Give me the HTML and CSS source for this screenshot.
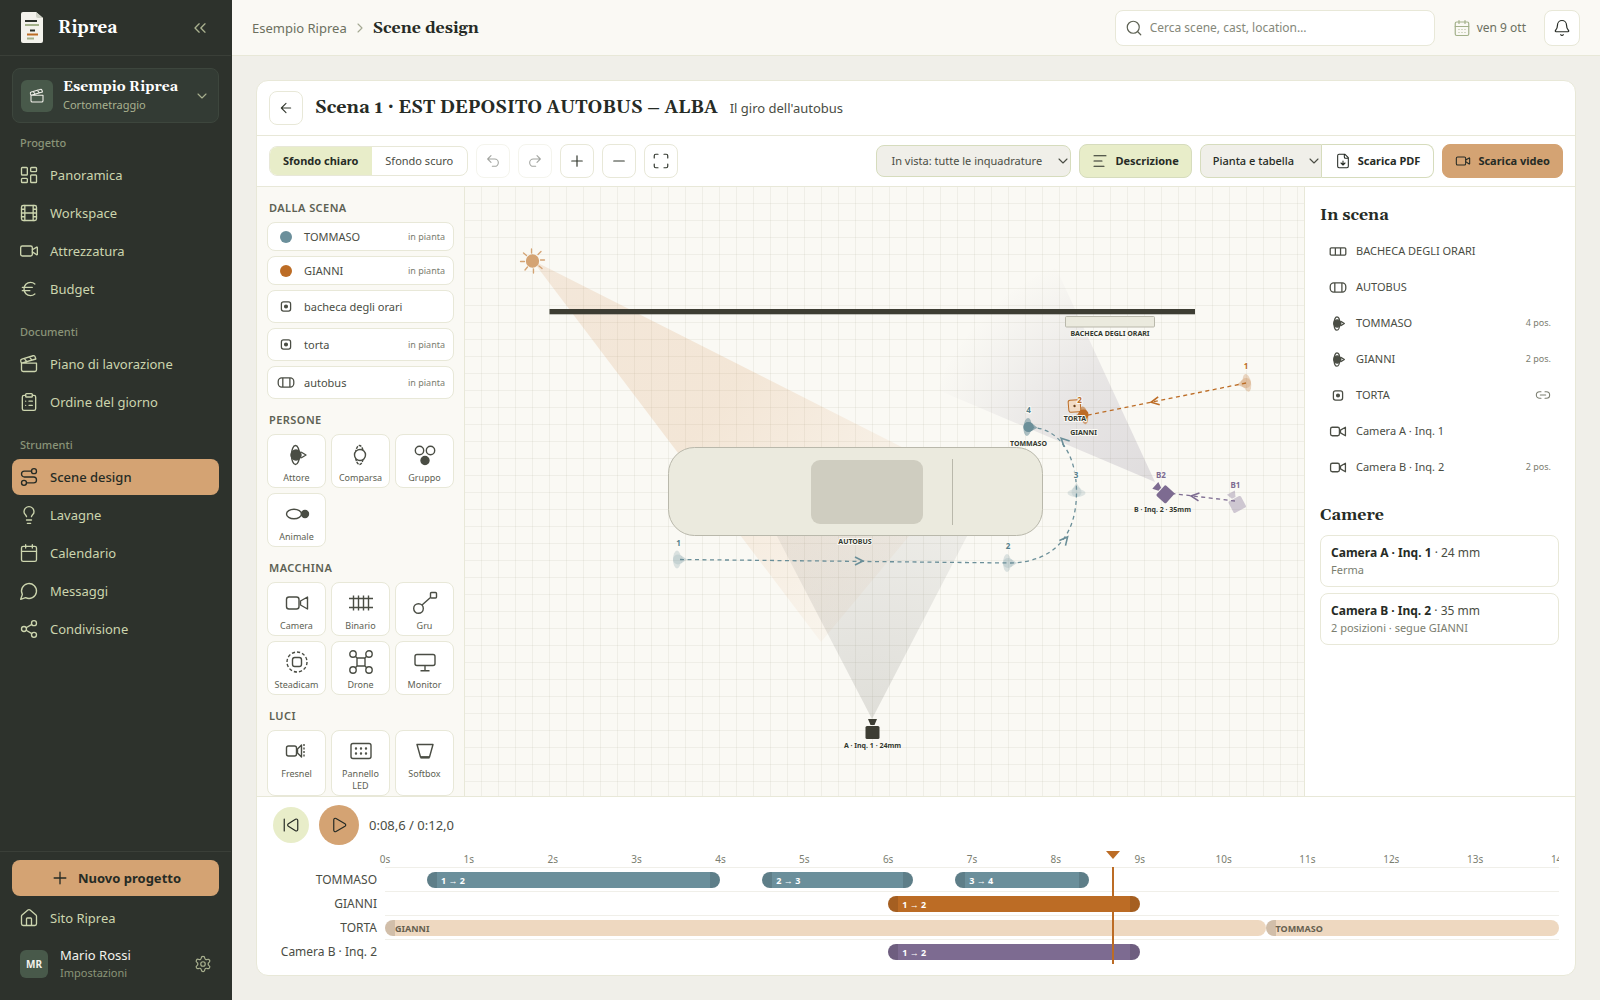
FILE: index.html
```html
<!DOCTYPE html>
<html lang="it">
<head>
<meta charset="utf-8">
<meta name="viewport" content="width=device-width, initial-scale=1">
<title>Scene design · Riprea</title>
<link rel="stylesheet" href="styles.css">
</head>
<body>
<svg class="sprite" aria-hidden="true">
  <symbol id="i-dashboard" viewBox="0 0 24 24"><rect x="3" y="3" width="7" height="9" rx="1"/><rect x="14" y="3" width="7" height="5" rx="1"/><rect x="14" y="12" width="7" height="9" rx="1"/><rect x="3" y="16" width="7" height="5" rx="1"/></symbol>
  <symbol id="i-film" viewBox="0 0 24 24"><rect x="3" y="3" width="18" height="18" rx="2"/><path d="M7 3v18M17 3v18M3 7.500h4M3 12h18M3 16.500h4M17 7.500h4M17 16.500h4"/></symbol>
  <symbol id="i-video" viewBox="0 0 24 24"><rect x="2" y="6" width="14" height="12" rx="2"/><path d="m16 13 5.223 3.482a.5.5 0 0 0 .777-.416V7.870a.5.5 0 0 0-.752-.432L16 10.500"/></symbol>
  <symbol id="i-euro" viewBox="0 0 24 24"><path d="M4 10h12M4 14h9M19 6a7.700 7.700 0 0 0-5.200-2A7.900 7.900 0 0 0 6 12c0 4.400 3.500 8 7.800 8 2 0 3.800-.8 5.200-2"/></symbol>
  <symbol id="i-clapper" viewBox="0 0 24 24"><path d="M20.200 6 3 11l-.9-2.400c-.3-1.100.3-2.200 1.300-2.500l13.500-4c1.100-.3 2.200.3 2.500 1.300ZM6.200 5.300l3.100 3.900M12.400 3.400l3.100 4M3 11h18v8a2 2 0 0 1-2 2H5a2 2 0 0 1-2-2Z"/></symbol>
  <symbol id="i-clipboard" viewBox="0 0 24 24"><rect x="8" y="2" width="8" height="4" rx="1"/><path d="M16 4h2a2 2 0 0 1 2 2v14a2 2 0 0 1-2 2H6a2 2 0 0 1-2-2V6a2 2 0 0 1 2-2h2M12 11h4M12 16h4M8 11h.01M8 16h.01"/></symbol>
  <symbol id="i-route" viewBox="0 0 24 24"><circle cx="6" cy="19" r="3"/><path d="M9 19h8.500a3.500 3.500 0 0 0 0-7h-11a3.500 3.500 0 0 1 0-7H15"/><circle cx="18" cy="5" r="3"/></symbol>
  <symbol id="i-bulb" viewBox="0 0 24 24"><path d="M15 14c.2-1 .7-1.700 1.500-2.500 1-.9 1.500-2.200 1.500-3.500A6 6 0 0 0 6 8c0 1 .2 2.200 1.500 3.500.7.7 1.300 1.500 1.500 2.500M9 18h6M10 22h4"/></symbol>
  <symbol id="i-calendar" viewBox="0 0 24 24"><rect x="3" y="4" width="18" height="18" rx="2"/><path d="M8 2v4M16 2v4M3 10h18"/></symbol>
  <symbol id="i-caldays" viewBox="0 0 24 24"><rect x="3" y="4" width="18" height="18" rx="2"/><path d="M8 2v4M16 2v4M3 10h18M8 14h.01M12 14h.01M16 14h.01M8 18h.01M12 18h.01M16 18h.01"/></symbol>
  <symbol id="i-message" viewBox="0 0 24 24"><path d="M7.900 20A9 9 0 1 0 4 16.100L2 22Z"/></symbol>
  <symbol id="i-share" viewBox="0 0 24 24"><circle cx="18" cy="5" r="3"/><circle cx="6" cy="12" r="3"/><circle cx="18" cy="19" r="3"/><path d="m8.600 13.500 6.800 4M15.400 6.500l-6.800 4"/></symbol>
  <symbol id="i-home" viewBox="0 0 24 24"><path d="M15 21v-8a1 1 0 0 0-1-1h-4a1 1 0 0 0-1 1v8M3 10a2 2 0 0 1 .7-1.500l7-6a2 2 0 0 1 2.600 0l7 6A2 2 0 0 1 21 10v9a2 2 0 0 1-2 2H5a2 2 0 0 1-2-2z"/></symbol>
  <symbol id="i-gear" viewBox="0 0 24 24"><path d="M9.700 4.100a2.300 2.300 0 0 1 4.600 0 2.300 2.300 0 0 0 3.300 1.900 2.300 2.300 0 0 1 2.300 4 2.300 2.300 0 0 0 0 3.900 2.300 2.300 0 0 1-2.300 4 2.300 2.300 0 0 0-3.300 1.900 2.300 2.300 0 0 1-4.600 0 2.300 2.300 0 0 0-3.300-1.900 2.300 2.300 0 0 1-2.300-4 2.300 2.300 0 0 0 0-3.900 2.300 2.300 0 0 1 2.300-4 2.300 2.300 0 0 0 3.300-1.900"/><circle cx="12" cy="12" r="3"/></symbol>
  <symbol id="i-chevs" viewBox="0 0 24 24"><path d="m11 17-5-5 5-5M18 17l-5-5 5-5"/></symbol>
  <symbol id="i-down" viewBox="0 0 24 24"><path d="m6 9 6 6 6-6"/></symbol>
  <symbol id="i-right" viewBox="0 0 24 24"><path d="m9 18 6-6-6-6"/></symbol>
  <symbol id="i-search" viewBox="0 0 24 24"><circle cx="11" cy="11" r="8"/><path d="m21 21-4.300-4.300"/></symbol>
  <symbol id="i-bell" viewBox="0 0 24 24"><path d="M10.300 21a2 2 0 0 0 3.400 0M3.300 15.300A1 1 0 0 0 4 17h16a1 1 0 0 0 .7-1.700C19.400 14 18 12.500 18 8A6 6 0 0 0 6 8c0 4.500-1.400 6-2.700 7.300"/></symbol>
  <symbol id="i-back" viewBox="0 0 24 24"><path d="m12 19-7-7 7-7M19 12H5"/></symbol>
  <symbol id="i-undo" viewBox="0 0 24 24"><path d="M9 14 4 9l5-5M4 9h10.500a5.500 5.500 0 0 1 0 11H11"/></symbol>
  <symbol id="i-redo" viewBox="0 0 24 24"><path d="m15 14 5-5-5-5M20 9H9.500a5.500 5.500 0 0 0 0 11H13"/></symbol>
  <symbol id="i-plus" viewBox="0 0 24 24"><path d="M5 12h14M12 5v14"/></symbol>
  <symbol id="i-minus" viewBox="0 0 24 24"><path d="M5 12h14"/></symbol>
  <symbol id="i-max" viewBox="0 0 24 24"><path d="M8 3H5a2 2 0 0 0-2 2v3M21 8V5a2 2 0 0 0-2-2h-3M3 16v3a2 2 0 0 0 2 2h3M16 21h3a2 2 0 0 0 2-2v-3"/></symbol>
  <symbol id="i-text" viewBox="0 0 24 24"><path d="M21 4H3M15 12H3M18 20H3"/></symbol>
  <symbol id="i-file" viewBox="0 0 24 24"><path d="M15 2H6a2 2 0 0 0-2 2v16a2 2 0 0 0 2 2h12a2 2 0 0 0 2-2V7ZM14 2v4a2 2 0 0 0 2 2h4M12 18v-6M9 15l3 3 3-3"/></symbol>
  <symbol id="i-skip" viewBox="0 0 24 24"><path d="M3 20V4M18 4.300a2 2 0 0 1 3 1.700v12a2 2 0 0 1-3 1.700l-9.500-6a2 2 0 0 1 0-3.400z"/></symbol>
  <symbol id="i-play" viewBox="0 0 24 24"><path d="M5 5a2 2 0 0 1 3-1.700l12 7a2 2 0 0 1 0 3.400l-12 7A2 2 0 0 1 5 19z"/></symbol>
  <symbol id="i-link" viewBox="0 0 24 24"><path d="M9 17H7A5 5 0 0 1 7 7h2M15 7h2a5 5 0 1 1 0 10h-2M8 12h8"/></symbol>

  <symbol id="p-actor" viewBox="0 0 28 24"><ellipse cx="12.500" cy="12" rx="4" ry="9.500"/><circle class="solid" cx="13" cy="12" r="5"/><path d="m18 9 5 3-5 3"/></symbol>
  <symbol id="p-extra" viewBox="0 0 28 24"><ellipse cx="12.500" cy="12" rx="4" ry="9.500" stroke-dasharray="3 1"/><circle class="paper" cx="13" cy="12" r="5.500"/></symbol>
  <symbol id="p-group" viewBox="0 0 28 24"><circle cx="8.500" cy="7.500" r="4.200"/><circle cx="19.500" cy="7.500" r="4.200"/><circle class="solid" cx="14" cy="17.500" r="4"/></symbol>
  <symbol id="p-animal" viewBox="0 0 28 24"><ellipse cx="11" cy="12" rx="7.500" ry="4.800"/><circle class="solid" cx="22" cy="12" r="3.500"/></symbol>
  <symbol id="p-camera" viewBox="0 0 28 24"><rect x="3.500" y="6" width="12.500" height="12" rx="2.500"/><path d="M17.500 10 24.500 6v12l-7-4z"/></symbol>
  <symbol id="p-track" viewBox="0 0 28 24"><path d="M2 7.500h24M2 16.500h24M6.500 4.500v15M11.500 4.500v15M16.500 4.500v15M21.500 4.500v15"/></symbol>
  <symbol id="p-crane" viewBox="0 0 28 24"><circle cx="7.500" cy="17.500" r="4.800"/><rect x="19.500" y="1.500" width="6" height="5.500" rx="1"/><path d="M11 14 19.500 6.500"/></symbol>
  <symbol id="p-steadi" viewBox="0 0 28 24"><circle cx="14" cy="12" r="10" stroke-dasharray="3.200 2"/><rect x="9.500" y="7.500" width="9" height="9" rx="2.200"/></symbol>
  <symbol id="p-drone" viewBox="0 0 28 24"><rect x="10" y="8" width="8" height="8" rx="1"/><circle cx="6" cy="4" r="3.200"/><circle cx="22" cy="4" r="3.200"/><circle cx="6" cy="20" r="3.200"/><circle cx="22" cy="20" r="3.200"/><path d="m8.300 6.300 2 2M19.700 6.300l-2 2M8.300 17.700l2-2M19.700 17.700l-2-2"/></symbol>
  <symbol id="p-monitor" viewBox="0 0 28 24"><rect x="4" y="4.500" width="20" height="11" rx="2"/><path d="M14 15.500v5M9.500 20.800h9"/></symbol>
  <symbol id="p-fresnel" viewBox="0 0 28 24"><rect x="3.500" y="7" width="10" height="10" rx="2"/><path d="M14.500 10 18.500 6v12l-4-4z"/><path d="M21 5v14" stroke-dasharray="2 1.500"/></symbol>
  <symbol id="p-led" viewBox="0 0 28 24"><rect x="4" y="4.500" width="20" height="15" rx="2"/><g class="solid"><circle cx="9" cy="9.500" r=".5"/><circle cx="14" cy="9.500" r=".5"/><circle cx="19" cy="9.500" r=".5"/><circle cx="9" cy="14.500" r=".5"/><circle cx="14" cy="14.500" r=".5"/><circle cx="19" cy="14.500" r=".5"/></g></symbol>
  <symbol id="p-soft" viewBox="0 0 28 24"><path d="M6 5.500h16L18.500 18h-9z"/><path d="M9.500 18.500h9" stroke-width="2.200"/></symbol>
  <symbol id="p-prop" viewBox="0 0 28 24"><rect x="7.500" y="5.500" width="13" height="13" rx="3"/><circle class="solid" cx="14" cy="12" r="2"/></symbol>
  <symbol id="p-bus" viewBox="0 0 28 24"><rect x="3" y="5.500" width="22" height="13" rx="5"/><path d="M9.500 5.500v13M19.500 5.500v13"/></symbol>
  <symbol id="p-board" viewBox="0 0 28 24"><rect x="3" y="7" width="22" height="10" rx="1.500"/><path d="M10.300 7v10M17.600 7v10"/></symbol>
</svg>

<div class="app">
  <aside class="sidebar">
    <div class="brand">
      <svg class="logo" viewBox="0 0 22 31" width="22" height="31" aria-hidden="true">
        <path d="M2 0h13l7 6v23a2 2 0 0 1-2 2H2a2 2 0 0 1-2-2V2a2 2 0 0 1 2-2z" fill="#f3f2ec"/>
        <path d="M15 0l7 6h-5a2 2 0 0 1-2-2z" fill="#cfd2c6"/>
        <path d="M4 9h12" stroke="#2d322c" stroke-width="2"/><path d="M4 13h14" stroke="#a3b18a" stroke-width="2"/>
        <path d="M9 18.500h5" stroke="#2d322c" stroke-width="2"/><path d="M6 22.500h11" stroke="#bc6c25" stroke-width="2"/><path d="M6 26.500h7" stroke="#a3b18a" stroke-width="2"/>
      </svg>
      <span class="brand-name">Riprea</span>
      <button class="ghost" aria-label="Comprimi menu"><svg class="icon"><use href="#i-chevs"/></svg></button>
    </div>
    <button class="project">
      <span class="project-icon"><svg class="icon icon-16"><use href="#i-clapper"/></svg></span>
      <span class="project-text"><strong>Esempio Riprea</strong><small>Cortometraggio</small></span>
      <svg class="icon icon-16"><use href="#i-down"/></svg>
    </button>
    <nav class="nav">
      <h2>Progetto</h2>
      <a href="#panoramica"><svg class="icon"><use href="#i-dashboard"/></svg>Panoramica</a>
      <a href="#workspace"><svg class="icon"><use href="#i-film"/></svg>Workspace</a>
      <a href="#attrezzatura"><svg class="icon"><use href="#i-video"/></svg>Attrezzatura</a>
      <a href="#budget"><svg class="icon"><use href="#i-euro"/></svg>Budget</a>
      <h2>Documenti</h2>
      <a href="#piano"><svg class="icon"><use href="#i-clapper"/></svg>Piano di lavorazione</a>
      <a href="#ordine"><svg class="icon"><use href="#i-clipboard"/></svg>Ordine del giorno</a>
      <h2>Strumenti</h2>
      <a href="#scene" class="active" aria-current="page"><svg class="icon"><use href="#i-route"/></svg>Scene design</a>
      <a href="#lavagne"><svg class="icon"><use href="#i-bulb"/></svg>Lavagne</a>
      <a href="#calendario"><svg class="icon"><use href="#i-calendar"/></svg>Calendario</a>
      <a href="#messaggi"><svg class="icon"><use href="#i-message"/></svg>Messaggi</a>
      <a href="#condivisione"><svg class="icon"><use href="#i-share"/></svg>Condivisione</a>
    </nav>
    <div class="side-foot">
      <button class="new-project"><svg class="icon"><use href="#i-plus"/></svg>Nuovo progetto</button>
      <a class="site" href="#sito"><svg class="icon"><use href="#i-home"/></svg>Sito Riprea</a>
      <a class="user" href="#impostazioni">
        <span class="avatar">MR</span>
        <span class="user-text"><span>Mario Rossi</span><small>Impostazioni</small></span>
        <svg class="icon icon-18"><use href="#i-gear"/></svg>
      </a>
    </div>
  </aside>

  <div class="main">
    <header class="topbar">
      <div class="crumbs"><a href="#progetto">Esempio Riprea</a><svg class="icon icon-16"><use href="#i-right"/></svg><h1>Scene design</h1></div>
      <label class="search"><svg class="icon icon-18"><use href="#i-search"/></svg><input type="search" placeholder="Cerca scene, cast, location…" aria-label="Cerca"></label>
      <span class="date"><svg class="icon icon-18"><use href="#i-caldays"/></svg>ven 9 ott</span>
      <button class="bell" aria-label="Notifiche"><svg class="icon icon-18"><use href="#i-bell"/></svg></button>
    </header>

    <main class="content">
      <section class="board">
        <div class="scene-head">
          <button class="square" aria-label="Indietro"><svg class="icon icon-16"><use href="#i-back"/></svg></button>
          <h2>Scena 1 · EST DEPOSITO AUTOBUS – ALBA</h2>
          <span>Il giro dell'autobus</span>
        </div>
        <div class="toolbar">
          <div class="segmented"><button class="on" aria-pressed="true">Sfondo chiaro</button><button aria-pressed="false">Sfondo scuro</button></div>
          <button class="square" disabled aria-label="Annulla"><svg class="icon icon-16"><use href="#i-undo"/></svg></button>
          <button class="square" disabled aria-label="Ripeti"><svg class="icon icon-16"><use href="#i-redo"/></svg></button>
          <button class="square" aria-label="Ingrandisci"><svg class="icon icon-18"><use href="#i-plus"/></svg></button>
          <button class="square" aria-label="Riduci"><svg class="icon icon-18"><use href="#i-minus"/></svg></button>
          <button class="square" aria-label="Adatta"><svg class="icon icon-18"><use href="#i-max"/></svg></button>
          <div class="tools-right">
            <span class="picker"><select aria-label="Inquadrature in vista"><option>In vista: tutte le inquadrature</option></select><svg class="icon icon-16"><use href="#i-down"/></svg></span>
            <button class="btn soft"><svg class="icon icon-18"><use href="#i-text"/></svg>Descrizione</button>
            <div class="export">
              <span class="picker joined"><select aria-label="Contenuto del PDF"><option>Pianta e tabella</option></select><svg class="icon icon-16"><use href="#i-down"/></svg></span>
              <button class="btn plain"><svg class="icon icon-18"><use href="#i-file"/></svg>Scarica PDF</button>
            </div>
            <button class="btn accent"><svg class="icon icon-18"><use href="#i-video"/></svg>Scarica video</button>
          </div>
        </div>

        <div class="stage">
          <div class="palette">
            <h3>Dalla scena</h3>
            <div class="cast">
              <button class="short"><i class="dot teal"></i>TOMMASO<small>in pianta</small></button>
              <button class="short"><i class="dot rust"></i>GIANNI<small>in pianta</small></button>
              <button><svg class="glyph small"><use href="#p-prop"/></svg>bacheca degli orari</button>
              <button><svg class="glyph small"><use href="#p-prop"/></svg>torta<small>in pianta</small></button>
              <button><svg class="glyph small"><use href="#p-bus"/></svg>autobus<small>in pianta</small></button>
            </div>
            <h3>Persone</h3>
            <div class="tiles">
              <button><svg class="glyph"><use href="#p-actor"/></svg>Attore</button>
              <button><svg class="glyph"><use href="#p-extra"/></svg>Comparsa</button>
              <button><svg class="glyph"><use href="#p-group"/></svg>Gruppo</button>
              <button><svg class="glyph"><use href="#p-animal"/></svg>Animale</button>
            </div>
            <h3>Macchina</h3>
            <div class="tiles">
              <button><svg class="glyph"><use href="#p-camera"/></svg>Camera</button>
              <button><svg class="glyph"><use href="#p-track"/></svg>Binario</button>
              <button><svg class="glyph"><use href="#p-crane"/></svg>Gru</button>
              <button><svg class="glyph"><use href="#p-steadi"/></svg>Steadicam</button>
              <button><svg class="glyph"><use href="#p-drone"/></svg>Drone</button>
              <button><svg class="glyph"><use href="#p-monitor"/></svg>Monitor</button>
            </div>
            <h3>Luci</h3>
            <div class="tiles">
              <button><svg class="glyph"><use href="#p-fresnel"/></svg>Fresnel</button>
              <button><svg class="glyph"><use href="#p-led"/></svg>Pannello LED</button>
              <button><svg class="glyph"><use href="#p-soft"/></svg>Softbox</button>
            </div>
          </div>

          <svg class="plan" viewBox="465 187 839 609" preserveAspectRatio="xMidYMid slice" role="img" aria-label="Pianta della scena">
            <defs>
              <pattern id="grid" x="464" y="186" width="17" height="17" patternUnits="userSpaceOnUse"><path d="M.5 0v17M0 .5h17" fill="none" stroke="#5d5d40" stroke-opacity=".07"/></pattern>
              <radialGradient id="sunlight" gradientUnits="userSpaceOnUse" cx="532" cy="260" r="478"><stop offset="0" stop-color="#d08a50" stop-opacity=".16"/><stop offset=".5" stop-color="#d49050" stop-opacity=".18"/><stop offset="1" stop-color="#dc9050" stop-opacity=".05"/></radialGradient>
              <radialGradient id="lensA" gradientUnits="userSpaceOnUse" cx="872" cy="718" r="260"><stop offset="0" stop-color="#3d3d33" stop-opacity=".14"/><stop offset="1" stop-color="#3d3d44" stop-opacity=".05"/></radialGradient>
              <radialGradient id="lensB" gradientUnits="userSpaceOnUse" cx="1155" cy="482" r="240"><stop offset="0" stop-color="#54486a" stop-opacity=".16"/><stop offset=".5" stop-color="#54486a" stop-opacity=".11"/><stop offset="1" stop-color="#54486a" stop-opacity="0"/></radialGradient>
              <g id="person"><ellipse cx="-1" rx="4" ry="9" opacity=".55"/><circle r="5" opacity=".75"/><path d="M3-4 9 0 3 4z" opacity=".7"/></g>
              <g id="cam"><rect x="-7" y="-6" width="14" height="13" rx="1.500"/><path d="M-4.500-13h9l-2.500 6h-4z"/></g>
              <path id="arrow" d="M-4-4 4 0-4 4"/>
            </defs>
            <rect x="465" y="187" width="839" height="609" fill="#faf9f4"/>
            <rect x="465" y="187" width="839" height="609" fill="url(#grid)"/>
            <path d="M532 260 821 642 959 476z" fill="url(#sunlight)"/>
            <path d="M872 719 740 465h264z" fill="url(#lensA)"/>
            <path d="M1155 482 938 390Q970 290 1056 268z" fill="url(#lensB)"/>
            <g stroke="#d4a373" stroke-width="1.300" stroke-linecap="round">
              <circle cx="532.500" cy="261" r="6" fill="#d4a373"/>
              <path d="M531.500 249v4M533.500 269v4M520.500 261.500h4M540.500 260h4M523.500 253l3 2.500M541 251.500l-3 3M525 270l2.500-3M542 268.500l-3-2.500"/>
            </g>
            <rect x="549.500" y="309" width="645.500" height="5.300" fill="#3d3d33"/>
            <g fill="#ebeade" stroke="#b9b8ab"><rect x="1065.500" y="316.500" width="89" height="10.500" rx="1"/><rect x="668.500" y="447.500" width="374" height="88" rx="26"/><path d="M952.500 459v66"/></g>
            <rect x="811" y="460" width="112" height="64" rx="9" fill="#cfcdc0"/>
            <g class="route teal-line">
              <path d="M680 559.500 1010 563C1055 562 1076.500 535 1076.500 492 1076.500 452 1057 429 1033 427.500"/>
              <use href="#arrow" transform="translate(859 561)"/><use href="#arrow" transform="translate(1065 540) rotate(-50)"/><use href="#arrow" transform="translate(1064 441) rotate(-135)"/>
            </g>
            <g class="route rust-line"><path d="M1246 383 1086 415.500"/><use href="#arrow" transform="translate(1155 401.500) rotate(169)"/></g>
            <g class="route violet-line"><path d="M1235 501 1172 493.500"/><use href="#arrow" transform="translate(1195 496.500) rotate(187)"/></g>
            <g fill="#6b8f99">
              <use href="#person" transform="translate(678 559.500)" opacity=".4"/><use href="#person" transform="translate(1008 563)" opacity=".4"/>
              <use href="#person" transform="translate(1076.500 492) rotate(-90)" opacity=".35"/><use href="#person" transform="translate(1028.500 427) rotate(5)"/><circle cx="1028.500" cy="427" r="5"/>
            </g>
            <g fill="#bc6c25"><use href="#person" transform="translate(1246 383) rotate(169)" opacity=".45"/><use href="#person" transform="translate(1083 415.500) rotate(169)"/><circle cx="1083.500" cy="414.500" r="5"/></g>
            <g transform="translate(1074.500 406) rotate(-5)" fill="#f2dcc6" stroke="#bc6c25"><rect x="-6" y="-6" width="12" height="12" rx="2"/><circle r="1.200" fill="#6b3f18" stroke="none"/></g>
            <g fill="#7d6b91"><use href="#cam" transform="translate(1165 494) rotate(-48)"/><use href="#cam" transform="translate(1237 504) rotate(-28)" opacity=".35"/></g>
            <use href="#cam" fill="#3d3d33" transform="translate(872.500 732)"/>
            <g class="names">
              <text x="855" y="544">AUTOBUS</text><text x="1110" y="336">BACHECA DEGLI ORARI</text><text x="1028.500" y="446">TOMMASO</text>
              <text x="1083.500" y="435">GIANNI</text><text x="1075" y="421">TORTA</text><text x="1162.500" y="512">B · Inq. 2 · 35mm</text><text x="872.500" y="748">A · Inq. 1 · 24mm</text>
            </g>
            <g class="names marks teal-text"><text x="678.500" y="546">1</text><text x="1008" y="549">2</text><text x="1076" y="478">3</text><text x="1028.500" y="413">4</text></g>
            <g class="names marks rust-text"><text x="1246" y="369">1</text><text x="1079.500" y="403">2</text></g>
            <g class="names marks violet-text"><text x="1161" y="478">B2</text><text x="1235.500" y="488">B1</text></g>
          </svg>

          <aside class="inspector">
            <h3>In scena</h3>
            <ul>
              <li><svg class="glyph small"><use href="#p-board"/></svg>BACHECA DEGLI ORARI</li>
              <li><svg class="glyph small"><use href="#p-bus"/></svg>AUTOBUS</li>
              <li><svg class="glyph small"><use href="#p-actor"/></svg>TOMMASO<small>4 pos.</small></li>
              <li><svg class="glyph small"><use href="#p-actor"/></svg>GIANNI<small>2 pos.</small></li>
              <li><svg class="glyph small"><use href="#p-prop"/></svg>TORTA<small><svg class="icon icon-16"><use href="#i-link"/></svg></small></li>
              <li><svg class="glyph small"><use href="#p-camera"/></svg>Camera A · Inq. 1</li>
              <li><svg class="glyph small"><use href="#p-camera"/></svg>Camera B · Inq. 2<small>2 pos.</small></li>
            </ul>
            <h3>Camere</h3>
            <div class="shots">
              <article><p><strong>Camera A · Inq. 1</strong> · 24 mm</p><p class="dim">Ferma</p></article>
              <article><p><strong>Camera B · Inq. 2</strong> · 35 mm</p><p class="dim">2 posizioni · segue GIANNI</p></article>
            </div>
          </aside>
        </div>

        <div class="timeline">
          <div class="transport">
            <button class="round start" aria-label="Torna all'inizio"><svg class="icon icon-18"><use href="#i-skip"/></svg></button>
            <button class="round play" aria-label="Riproduci"><svg class="icon icon-18"><use href="#i-play"/></svg></button>
            <span>0:08,6 / 0:12,0</span>
          </div>
          <div class="score">
            <div class="lanes-names"><span>TOMMASO</span><span>GIANNI</span><span>TORTA</span><span>Camera B · Inq. 2</span></div>
            <div class="lanes">
              <div class="ruler"><span>0s</span><span>1s</span><span>2s</span><span>3s</span><span>4s</span><span>5s</span><span>6s</span><span>7s</span><span>8s</span><span>9s</span><span>10s</span><span>11s</span><span>12s</span><span>13s</span><span>14s</span></div>
              <div class="lane"><span class="bar teal" style="grid-column:6 / 41">1 → 2</span><span class="bar teal" style="grid-column:46 / 64">2 → 3</span><span class="bar teal" style="grid-column:69 / 85">3 → 4</span></div>
              <div class="lane"><span class="bar rust" style="grid-column:61 / 91">1 → 2</span></div>
              <div class="lane"><span class="bar sand" style="grid-column:1 / 106">GIANNI</span><span class="bar sand" style="grid-column:106 / 141">TOMMASO</span></div>
              <div class="lane"><span class="bar violet" style="grid-column:61 / 91">1 → 2</span></div>
              <div class="playhead" style="left:61.9%"></div>
            </div>
          </div>
        </div>
      </section>
    </main>
  </div>
</div>
</body>
</html>
```
FILE: styles.css
```css
:root {
  --ink: #262b25;
  --text: #4a4d44;
  --dim: #7b7e70;
  --line: #e8e8d8;
  --accent: #d4a373;
  --soft: #e8edc9;
  --leaf: #ccd5ae;
  --teal: #6b8f9b;
  --rust: #bc6c25;
  --violet: #7d6b91;
  --serif: Georgia, Gelasio, "Liberation Serif", serif;
}

* { box-sizing: border-box; }
body { margin: 0; font: 13px/20px "Noto Sans", sans-serif; color: var(--text); background: #f0efe9; }
h1, h2, h3, p, ul { margin: 0; padding: 0; }
ul { list-style: none; }
a { color: inherit; text-decoration: none; }
button, select, input { font: inherit; color: inherit; margin: 0; }
button { padding: 0; border: 0; background: none; cursor: pointer; }

.sprite { display: none; }
.icon { width: 20px; height: 20px; flex: none; fill: none; stroke: currentColor; stroke-width: 1.6; stroke-linecap: round; stroke-linejoin: round; }
.icon-18 { width: 18px; height: 18px; }
.icon-16 { width: 16px; height: 16px; }
.glyph { width: 28px; height: 24px; flex: none; overflow: visible; fill: none; stroke: #4a4d44; stroke-width: 1.4; stroke-linejoin: round; }
.glyph.small { width: 20px; height: 17px; stroke-width: 1.8; }
.solid { fill: #4a4d44; }
.paper { fill: #fff; }

.app { display: flex; height: 100vh; }

/* Sidebar */
.sidebar { width: 232px; flex: none; display: flex; flex-direction: column; background: #2d322c; border-right: 1px solid #2d322c; color: var(--leaf); }
.brand { display: flex; align-items: center; height: 56px; padding: 0 21px; border-bottom: 1px solid #3a3f38; }
.brand-name { flex: 1; margin-left: 15px; font: bold 17px/24px var(--serif); color: #fff; }
.ghost { display: flex; color: #a9b18f; }
.project { display: flex; align-items: center; gap: 10px; height: 55px; margin: 12px 12px 0; padding: 0 8px; border: 1px solid #3d463d; border-radius: 8px; background: #333b34; text-align: left; color: #a9b18f; }
.project-icon { display: grid; place-items: center; flex: none; width: 32px; height: 32px; border-radius: 6px; background: #48594a; color: #f3f2ec; }
.project-text { flex: 1; display: flex; flex-direction: column; white-space: nowrap; }
.project-text strong { font: bold 14px/19px var(--serif); color: #fff; }
.project-text small { font-size: 11px; line-height: 16px; }
.nav { flex: 1; display: flex; flex-direction: column; gap: 2px; padding: 0 12px; }
.nav h2 { margin: 15px 8px 4px; font-size: 11px; line-height: 16px; font-weight: 500; color: #8a9478; }
.nav h2:first-child { margin-top: 12px; }
.nav a, .site { display: flex; align-items: center; gap: 11px; height: 36px; padding: 0 7px; border-radius: 8px; }
.nav a.active { background: var(--accent); color: var(--ink); font-weight: 500; }
.side-foot { display: flex; flex-direction: column; gap: 4px; padding: 8px 12px 12px; border-top: 1px solid #3a3f38; }
.new-project { display: flex; align-items: center; justify-content: center; gap: 8px; height: 36px; border-radius: 8px; background: var(--accent); color: var(--ink); font-weight: 700; }
.user { display: flex; align-items: center; gap: 12px; height: 48px; padding: 0 7px 0 8px; }
.avatar { display: grid; place-items: center; width: 28px; height: 28px; border-radius: 6px; background: #48594a; color: #f3f2ec; font-size: 10px; font-weight: 700; }
.user-text { flex: 1; display: flex; flex-direction: column; line-height: 18px; color: #f3f2ec; }
.user-text small { font-size: 11px; color: #8a9478; }
.user .icon { color: #a9b18f; }

/* Top bar */
.main { flex: 1; min-width: 0; display: flex; flex-direction: column; }
.topbar { display: flex; align-items: center; gap: 18px; height: 56px; flex: none; padding: 0 20px; background: #faf9f4; border-bottom: 1px solid var(--line); }
.crumbs { flex: 1; display: flex; align-items: center; gap: 5px; color: #6c705f; }
.crumbs .icon { color: #a3a891; }
.crumbs h1 { font: bold 16px/24px var(--serif); color: var(--ink); }
.search { display: flex; align-items: center; gap: 7px; width: 320px; height: 36px; padding: 0 9px; border: 1px solid var(--line); border-radius: 8px; background: #fff; color: #5d6153; }
.search input { flex: 1; min-width: 0; border: 0; outline: 0; padding: 0; background: none; font-size: 12px; }
.search input::placeholder { color: #85887a; }
.date { display: flex; align-items: center; gap: 6px; font-size: 12px; color: #6c705f; }
.date .icon { color: #a3b18a; }
.bell { display: grid; place-items: center; width: 36px; height: 36px; border: 1px solid var(--line); border-radius: 8px; background: #fff; color: var(--ink); }

/* Board */
.content { flex: 1; min-height: 0; padding: 24px; }
.board { display: flex; flex-direction: column; height: 100%; border: 1px solid var(--line); border-radius: 12px; background: #fff; overflow: hidden; }
.scene-head, .toolbar { display: flex; align-items: center; flex: none; padding: 0 12px; border-bottom: 1px solid var(--line); }
.scene-head { gap: 12px; height: 55px; }
.scene-head h2 { font: bold 18px/24px var(--serif); color: var(--ink); }
.toolbar { gap: 8px; height: 51px; font-size: 11px; }
.square { display: grid; place-items: center; width: 34px; height: 34px; flex: none; border: 1px solid var(--line); border-radius: 8px; background: #fff; color: #33382f; }
.square:disabled { opacity: .45; }
.segmented { display: flex; height: 30px; border: 1px solid var(--line); border-radius: 8px; overflow: hidden; }
.segmented button { padding: 0 14px 0 13px; }
.segmented .on { background: var(--soft); color: var(--ink); font-weight: 700; }
.tools-right { display: flex; align-items: center; gap: 8px; margin-left: auto; }
.picker { display: grid; align-items: center; }
.picker select, .picker .icon { grid-area: 1 / 1; }
.picker .icon { justify-self: end; pointer-events: none; }
.picker select { appearance: none; height: 32px; width: 195px; padding: 0 24px 0 14px; border: 1px solid #d6dcbd; border-radius: 8px; background: #f0efe9; }
.picker.joined select { width: 122px; height: 34px; padding-left: 12px; border-radius: 8px 0 0 8px; font-weight: 500; color: var(--ink); }
.export { display: flex; }
.btn { display: flex; align-items: center; gap: 7px; height: 34px; padding: 0 12px; border: 1px solid #d6dcbd; border-radius: 8px; font-weight: 700; color: var(--ink); white-space: nowrap; }
.btn .icon { width: 16px; height: 16px; }
.btn.soft { background: var(--soft); }
.btn.plain { padding: 0 13px; border-left: 0; border-radius: 0 8px 8px 0; }
.btn.accent { background: var(--accent); border-color: var(--accent); }

.stage { flex: 1; min-height: 0; display: flex; }
.palette { width: 208px; flex: none; padding: 0 10px; overflow: hidden; background: #faf9f4; border-right: 1px solid var(--line); }
.palette h3 { margin: 13px 2px 6px; font-size: 11px; line-height: 16px; font-weight: 600; letter-spacing: .04em; text-transform: uppercase; color: #5d6153; }
.cast { display: flex; flex-direction: column; gap: 5px; font-size: 11px; }
.cast button { display: flex; align-items: center; gap: 8px; height: 33px; padding: 0 8px; border: 1px solid var(--line); border-radius: 8px; background: #fff; }
.cast .short { height: 29px; }
.cast small { margin-left: auto; font-size: 9px; color: var(--dim); }
.dot { width: 12px; height: 12px; margin: 0 4px; border-radius: 50%; }
.teal { background-color: var(--teal); }
.rust { background-color: var(--rust); }
.violet { background-color: var(--violet); }
.tiles { display: grid; grid-template-columns: repeat(3, 1fr); gap: 5px; }
.tiles button { display: flex; flex-direction: column; align-items: center; gap: 5px; min-height: 54px; padding: 8px 2px 3px; border: 1px solid var(--line); border-radius: 8px; background: #fff; font-size: 9px; line-height: 12px; color: #5d6153; }

.plan { flex: 1; min-width: 0; height: 100%; display: block; }
.route { fill: none; stroke-width: 1.3; }
.route path { stroke-dasharray: 4 3.500; }
.route use { stroke-width: 1.6; }
#arrow { stroke-dasharray: none; }
.teal-line { stroke: #6b8f99; }
.rust-line { stroke: #bc6c25; }
.violet-line { stroke: #7d6b91; }
.names { font-size: 7px; font-weight: 700; text-anchor: middle; fill: #33382f; stroke: #faf9f4; stroke-width: 2px; paint-order: stroke; stroke-linejoin: round; }
.marks { font-size: 8px; }
.teal-text { fill: #557f8b; }
.rust-text { fill: #bc6c25; }
.violet-text { fill: #7d6b91; }

.inspector { width: 271px; flex: none; padding: 16px 16px 0 15px; border-left: 1px solid var(--line); font-size: 11px; }
.inspector h3 { margin-bottom: 6px; font: bold 16px/24px var(--serif); color: var(--ink); }
.inspector ul { margin-bottom: 18px; }
.inspector li { display: flex; align-items: center; gap: 8px; height: 36px; padding: 0 8px; }
.inspector small { display: flex; margin-left: auto; font-size: 9px; color: var(--dim); }
.shots { display: flex; flex-direction: column; gap: 6px; margin-top: 8px; }
.shots article { padding: 8px 10px; border: 1px solid var(--line); border-radius: 8px; font-size: 12px; line-height: 17px; }
.shots strong { color: var(--ink); }
.shots .dim { font-size: 11px; color: var(--dim); }

/* Timeline */
.timeline { flex: none; padding: 8px 16px 11px; border-top: 1px solid var(--line); }
.transport { display: flex; align-items: center; gap: 10px; height: 40px; }
.round { display: grid; place-items: center; border-radius: 50%; color: var(--ink); }
.start { width: 36px; height: 36px; background: var(--soft); }
.play { width: 40px; height: 40px; background: var(--accent); }
.score { display: flex; gap: 8px; }
.lanes-names { width: 104px; flex: none; display: flex; flex-direction: column; padding-top: 23px; text-align: right; font-size: 12px; line-height: 24px; white-space: nowrap; }
.lanes { position: relative; flex: 1; min-width: 0; }
.ruler { display: grid; grid-template-columns: repeat(14, 1fr) 0; height: 22px; clip-path: inset(0 0 0 -20px); font-size: 10px; line-height: 28px; color: var(--dim); }
.ruler span { display: flex; justify-content: center; width: 0; }
.lane { display: grid; grid-template-columns: repeat(140, 1fr); height: 24px; padding-top: 4px; border-top: 1px solid #f0efe9; }
.bar { height: 16px; padding-left: 14px; border-radius: 8px; overflow: hidden; font-size: 9px; line-height: 17px; font-weight: 700; color: #fff; white-space: nowrap; background-image: linear-gradient(90deg, rgba(0, 0, 0, .12) 10px, transparent 10px, transparent calc(100% - 10px), rgba(0, 0, 0, .12) calc(100% - 10px)); }
.sand { padding-left: 10px; background-color: #eed8c0; background-image: linear-gradient(90deg, rgba(0, 0, 0, .12) 10px, transparent 10px); color: #66604f; }
.playhead { position: absolute; top: 22px; bottom: 0; width: 2px; background: var(--rust); }
.playhead::before { content: ""; position: absolute; left: -6px; top: -16px; border: 7px solid transparent; border-top: 8px solid var(--rust); border-bottom: 0; }
```
